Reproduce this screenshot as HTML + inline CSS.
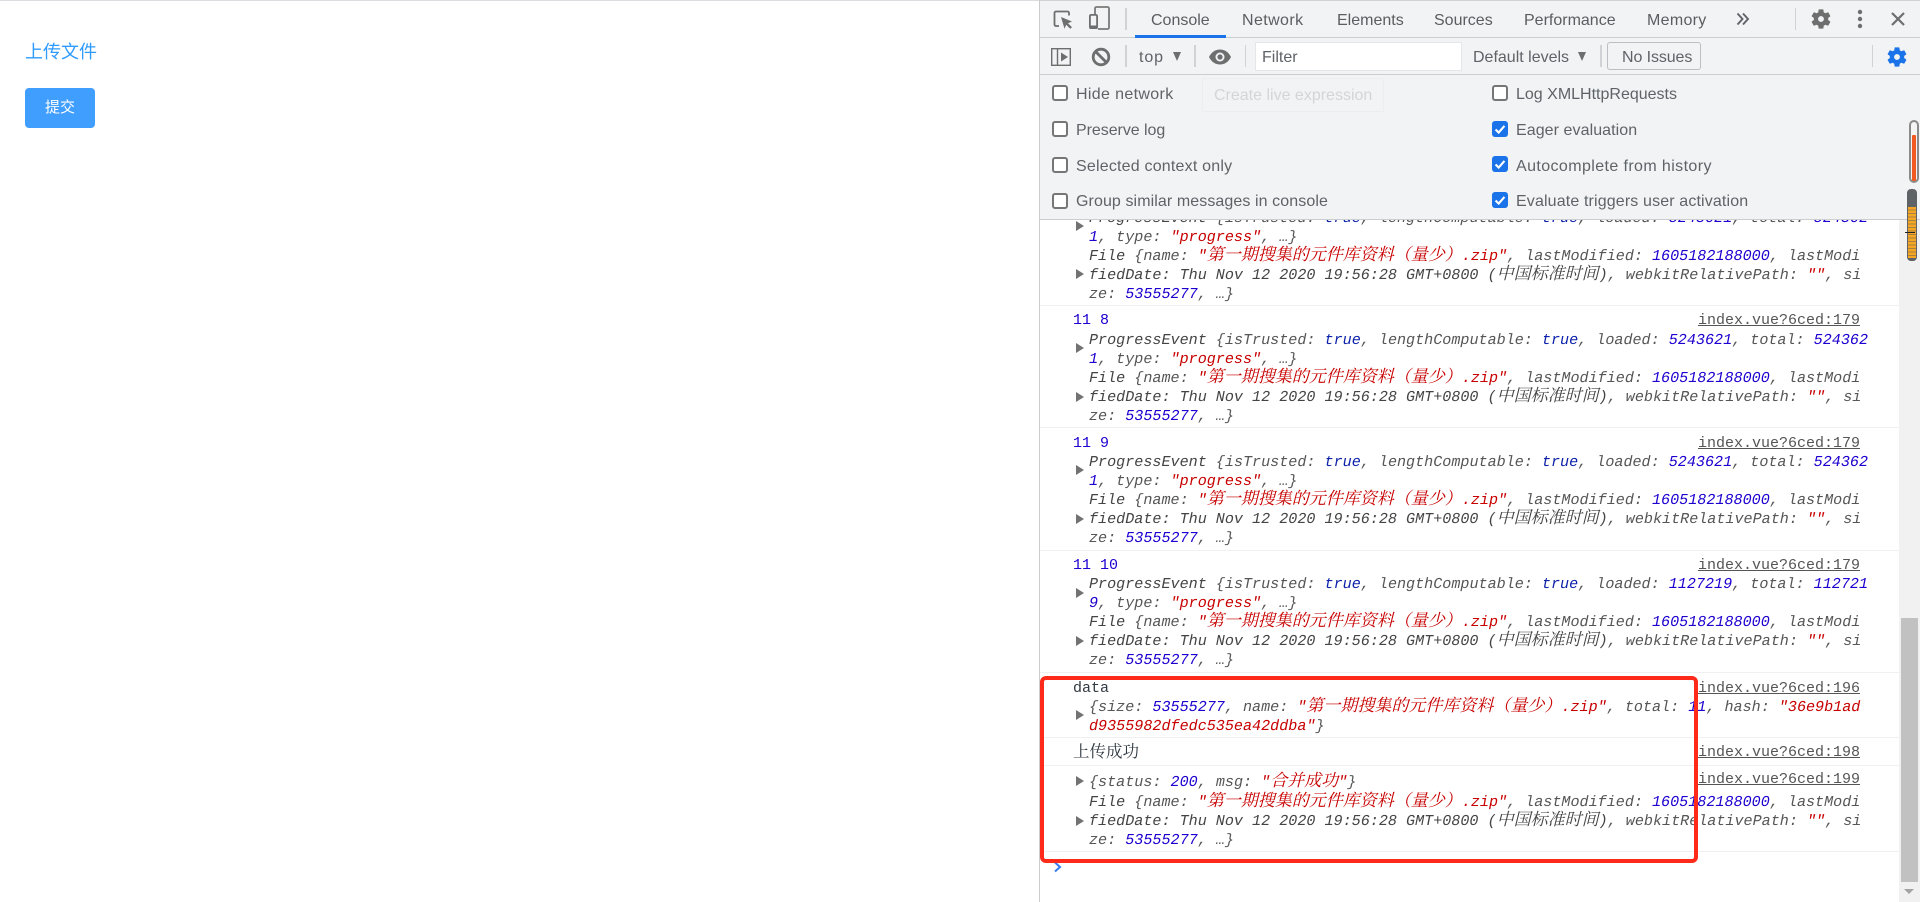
<!DOCTYPE html>
<html><head><meta charset="utf-8"><style>
html,body{margin:0;padding:0;background:#fff;width:1920px;height:902px;overflow:hidden}
body{position:relative;font-family:"Liberation Sans","Noto Sans CJK SC",sans-serif}
div,span.a,svg{position:absolute}
.t{white-space:pre;font-size:16px;color:#5f6368;line-height:20px;height:20px}
.tab{top:11px;color:#5a5d61}
.s{width:2px;background:#d0d2d5}
.cb{width:12px;height:12px;border:2px solid #767676;border-radius:3px;background:#fff}
.ck{width:16px;height:16px;border-radius:3px;background:#1a73e8}
.ck svg{left:0;top:0}
#con{left:1040px;top:220px;width:859px;height:682px;overflow:hidden;background:#fff}
.l{position:absolute;left:49px;margin-top:1px;white-space:pre;font:italic 15.100px/19px "Liberation Mono","Noto Serif CJK SC",monospace;text-rendering:geometricPrecision;height:19px;color:#565656}
.n{position:absolute;left:33px;margin-top:1px;white-space:pre;font:15px/19px "Liberation Mono","Noto Serif CJK SC",monospace;height:19px;color:#303942}
.k{position:absolute;right:39px;margin-top:1px;white-space:pre;font:15px/19px "Liberation Mono",monospace;height:19px;color:#555;text-decoration:underline}
.d{color:#444}.r{color:#c80000}.b{color:#1c00cf}.v{color:#0d22aa}
.c{font-size:17px;line-height:0}
.sep{position:absolute;left:0;width:859px;height:1px;background:#f0f0f0}
.ar{position:absolute;left:36px;width:0;height:0;border-left:8px solid #727272;border-top:5px solid transparent;border-bottom:5px solid transparent}
.row{position:absolute;left:0;width:859px;height:123px}
</style></head><body>

<div style="left:0;top:0;width:1040px;height:1px;background:#dadce0"></div>
<div style="left:25px;top:40px;font-size:18px;line-height:24px;color:#2f9bff;white-space:pre">上传文件</div>
<div style="left:25px;top:88px;width:70px;height:40px;border-radius:4px;background:#409eff;color:#fff;font-size:15px;line-height:40px;text-align:center">提交</div>

<!-- devtools -->
<div style="left:1039px;top:0;width:1px;height:902px;background:#ccc"></div>

<div id="con">
<div class="row" style="top:-37px">
<div class="l" style="top:25px"><span class="d">ProgressEvent</span> {isTrusted: <span class="v">true</span>, lengthComputable: <span class="v">true</span>, loaded: <span class="b">5243621</span>, total: <span class="b">524362</span></div>
<div class="l" style="top:44px"><span class="b">1</span>, type: <span class="r">"progress"</span>, …}</div>
<div class="l" style="top:63px"><span class="d">File</span> {name: <span class="r">"<span class="c">第一期搜集的元件库资料（量少）</span>.zip"</span>, lastModified: <span class="b">1605182188000</span>, lastModi</div>
<div class="l" style="top:82px"><span class="d">fiedDate: Thu Nov 12 2020 19:56:28 GMT+0800 (<span class="c">中国标准时间</span>)</span>, webkitRelativePath: <span class="r">""</span>, si</div>
<div class="l" style="top:101px">ze: <span class="b">53555277</span>, …}</div>
<div class="ar" style="top:38px"></div>
<div class="ar" style="top:86px"></div>
<div class="sep" style="top:122px"></div>
</div>

<div class="row" style="top:85px">
<div class="n" style="top:5px;color:#1c00cf">11 8</div>
<div class="k" style="top:5px">index.vue?6ced:179</div>
<div class="l" style="top:25px"><span class="d">ProgressEvent</span> {isTrusted: <span class="v">true</span>, lengthComputable: <span class="v">true</span>, loaded: <span class="b">5243621</span>, total: <span class="b">524362</span></div>
<div class="l" style="top:44px"><span class="b">1</span>, type: <span class="r">"progress"</span>, …}</div>
<div class="l" style="top:63px"><span class="d">File</span> {name: <span class="r">"<span class="c">第一期搜集的元件库资料（量少）</span>.zip"</span>, lastModified: <span class="b">1605182188000</span>, lastModi</div>
<div class="l" style="top:82px"><span class="d">fiedDate: Thu Nov 12 2020 19:56:28 GMT+0800 (<span class="c">中国标准时间</span>)</span>, webkitRelativePath: <span class="r">""</span>, si</div>
<div class="l" style="top:101px">ze: <span class="b">53555277</span>, …}</div>
<div class="ar" style="top:38px"></div>
<div class="ar" style="top:87px"></div>
<div class="sep" style="top:122px"></div>
</div>

<div class="row" style="top:208px">
<div class="n" style="top:5px;color:#1c00cf">11 9</div>
<div class="k" style="top:5px">index.vue?6ced:179</div>
<div class="l" style="top:24px"><span class="d">ProgressEvent</span> {isTrusted: <span class="v">true</span>, lengthComputable: <span class="v">true</span>, loaded: <span class="b">5243621</span>, total: <span class="b">524362</span></div>
<div class="l" style="top:43px"><span class="b">1</span>, type: <span class="r">"progress"</span>, …}</div>
<div class="l" style="top:62px"><span class="d">File</span> {name: <span class="r">"<span class="c">第一期搜集的元件库资料（量少）</span>.zip"</span>, lastModified: <span class="b">1605182188000</span>, lastModi</div>
<div class="l" style="top:81px"><span class="d">fiedDate: Thu Nov 12 2020 19:56:28 GMT+0800 (<span class="c">中国标准时间</span>)</span>, webkitRelativePath: <span class="r">""</span>, si</div>
<div class="l" style="top:100px">ze: <span class="b">53555277</span>, …}</div>
<div class="ar" style="top:37px"></div>
<div class="ar" style="top:86px"></div>
<div class="sep" style="top:122px"></div>
</div>

<div class="row" style="top:330px">
<div class="n" style="top:5px;color:#1c00cf">11 10</div>
<div class="k" style="top:5px">index.vue?6ced:179</div>
<div class="l" style="top:24px"><span class="d">ProgressEvent</span> {isTrusted: <span class="v">true</span>, lengthComputable: <span class="v">true</span>, loaded: <span class="b">1127219</span>, total: <span class="b">112721</span></div>
<div class="l" style="top:43px"><span class="b">9</span>, type: <span class="r">"progress"</span>, …}</div>
<div class="l" style="top:62px"><span class="d">File</span> {name: <span class="r">"<span class="c">第一期搜集的元件库资料（量少）</span>.zip"</span>, lastModified: <span class="b">1605182188000</span>, lastModi</div>
<div class="l" style="top:81px"><span class="d">fiedDate: Thu Nov 12 2020 19:56:28 GMT+0800 (<span class="c">中国标准时间</span>)</span>, webkitRelativePath: <span class="r">""</span>, si</div>
<div class="l" style="top:100px">ze: <span class="b">53555277</span>, …}</div>
<div class="ar" style="top:38px"></div>
<div class="ar" style="top:86px"></div>
<div class="sep" style="top:122px"></div>
</div>

<!-- data -->
<div class="n" style="top:458px">data</div>
<div class="k" style="top:458px">index.vue?6ced:196</div>
<div class="l" style="top:477px">{size: <span class="b">53555277</span>, name: <span class="r">"<span class="c">第一期搜集的元件库资料（量少）</span>.zip"</span>, total: <span class="b">11</span>, hash: <span class="r">"36e9b1ad</span></div>
<div class="l" style="top:496px"><span class="r">d9355982dfedc535ea42ddba"</span>}</div>
<div class="ar" style="top:490px"></div>
<div class="sep" style="top:517px"></div>
<div class="n" style="top:522px;font-size:16.500px">上传成功</div>
<div class="k" style="top:522px">index.vue?6ced:198</div>
<div class="sep" style="top:545px"></div>
<div class="k" style="top:549px">index.vue?6ced:199</div>
<div class="l" style="top:552px">{status: <span class="b">200</span>, msg: <span class="r">"<span class="c">合并成功</span>"</span>}</div>
<div class="ar" style="top:556px"></div>
<div class="l" style="top:572px"><span class="d">File</span> {name: <span class="r">"<span class="c">第一期搜集的元件库资料（量少）</span>.zip"</span>, lastModified: <span class="b">1605182188000</span>, lastModi</div>
<div class="l" style="top:591px"><span class="d">fiedDate: Thu Nov 12 2020 19:56:28 GMT+0800 (<span class="c">中国标准时间</span>)</span>, webkitRelativePath: <span class="r">""</span>, si</div>
<div class="l" style="top:610px">ze: <span class="b">53555277</span>, …}</div>
<div class="ar" style="top:596px"></div>
<div class="sep" style="top:631px"></div>
<svg style="left:13px;top:641px" width="10" height="12" viewBox="0 0 10 12"><path d="M2 1.500L7 6L2 10.500" fill="none" stroke="#367cf1" stroke-width="2"/></svg>
</div>

<!-- scrollbar -->
<div style="left:1899px;top:219px;width:21px;height:683px;background:#f1f1f1"></div>
<div style="left:1901px;top:618px;width:17px;height:264px;background:#c1c1c1"></div>
<div style="left:1904px;top:889px;width:0;height:0;border-left:5px solid transparent;border-right:5px solid transparent;border-top:5px solid #a3a3a3"></div>

<!-- top bars -->
<div style="left:1040px;top:0;width:880px;height:219px;background:#f1f3f4"></div>
<div style="left:1040px;top:0;width:880px;height:1px;background:#d0d2d5"></div>
<div style="left:1040px;top:37px;width:880px;height:1px;background:#cbcdd1"></div>
<div style="left:1040px;top:74px;width:880px;height:1px;background:#cbcdd1"></div>
<div style="left:1040px;top:219px;width:880px;height:1px;background:#cbcdd1"></div>

<!-- row 1 icons -->
<svg style="left:1052px;top:8px" width="22" height="22" viewBox="0 0 22 22"><path d="M7 18H4a1.500 1.500 0 0 1-1.500-1.500V5A1.500 1.500 0 0 1 4 3.500h11.500A1.500 1.500 0 0 1 17 5v2.500" fill="none" stroke="#6e6e6e" stroke-width="1.800"/><path d="M9 9l11 4.500-4 1.700 4 4-1.800 1.500-4-4-1.700 4z" fill="#6e6e6e"/></svg>
<svg style="left:1088px;top:6px" width="24" height="25" viewBox="0 0 24 25"><path d="M7 9V2.500A1.500 1.500 0 0 1 8.500 1h11A1.500 1.500 0 0 1 21 2.500v19a1.500 1.500 0 0 1-1.500 1.500H10" fill="none" stroke="#7a7a7a" stroke-width="1.800"/><rect x="1.900" y="8.900" width="7.200" height="13.200" rx="1.200" fill="none" stroke="#6e6e6e" stroke-width="1.800"/><rect x="1.500" y="19.500" width="8" height="3.500" fill="#6e6e6e"/></svg>
<div class="s" style="left:1125px;top:8px;height:22px"></div>
<div class="t tab" style="left:1151px">Console</div>
<div style="left:1135px;top:35px;width:91px;height:3px;background:#1a73e8"></div>
<div class="t tab" style="left:1242px;letter-spacing:.4px">Network</div>
<div class="t tab" style="left:1337px">Elements</div>
<div class="t tab" style="left:1434px">Sources</div>
<div class="t tab" style="left:1524px">Performance</div>
<div class="t tab" style="left:1647px;letter-spacing:.3px">Memory</div>
<svg style="left:1736px;top:12px" width="14" height="14" viewBox="0 0 14 14"><path d="M1.500 1.500L6.500 7L1.500 12.500M7 1.500L12 7L7 12.500" fill="none" stroke="#5f6368" stroke-width="1.900"/></svg>
<div class="s" style="left:1795px;top:8px;height:22px;width:1px"></div>
<svg style="left:1809px;top:6.500px" width="24" height="24" viewBox="0 0 24 24"><path fill="#6e6e6e" d="M19.140 12.940c.04-.3.06-.61.06-.94 0-.32-.02-.64-.07-.94l2.030-1.580c.18-.14.23-.41.12-.61l-1.920-3.320c-.12-.22-.37-.29-.59-.22l-2.390.96c-.5-.38-1.030-.7-1.620-.94l-.36-2.540c-.04-.24-.24-.41-.48-.41h-3.840c-.24 0-.43.17-.47.41l-.36 2.540c-.59.24-1.130.57-1.620.94l-2.390-.96c-.22-.08-.47 0-.59.22L2.740 8.870c-.12.21-.08.47.12.61l2.030 1.580c-.05.3-.09.63-.09.94s.02.64.07.94l-2.030 1.580c-.18.14-.23.41-.12.61l1.920 3.320c.12.22.37.29.59.22l2.390-.96c.5.38 1.030.7 1.620.94l.36 2.540c.05.24.24.41.48.41h3.840c.24 0 .44-.17.47-.41l.36-2.540c.59-.24 1.130-.56 1.620-.94l2.390.96c.22.08.47 0 .59-.22l1.920-3.320c.12-.22.07-.47-.12-.61l-2.010-1.580zM12 14.900c-1.600 0-2.900-1.300-2.900-2.900s1.300-2.900 2.900-2.900 2.900 1.300 2.900 2.900-1.300 2.900-2.900 2.900z"/></svg>
<svg style="left:1855px;top:8px" width="10" height="22" viewBox="0 0 10 22"><circle cx="5" cy="4" r="2.200" fill="#6e6e6e"/><circle cx="5" cy="11" r="2.200" fill="#6e6e6e"/><circle cx="5" cy="18" r="2.200" fill="#6e6e6e"/></svg>
<svg style="left:1890px;top:11px" width="16" height="16" viewBox="0 0 16 16"><path d="M2 2L14 14M14 2L2 14" stroke="#6e6e6e" stroke-width="2.200" fill="none"/></svg>

<!-- row 2 -->
<svg style="left:1050px;top:47px" width="22" height="20" viewBox="0 0 22 20"><rect x="1.700" y="1.700" width="18.600" height="16.600" fill="none" stroke="#6e6e6e" stroke-width="1.400"/><path d="M7.500 1v18" stroke="#6e6e6e" stroke-width="1.400"/><path d="M11 5.500l7 4.500-7 4.500z" fill="#6e6e6e"/></svg>
<svg style="left:1091px;top:47px" width="20" height="20" viewBox="0 0 20 20"><circle cx="10" cy="10" r="7.800" fill="none" stroke="#6e6e6e" stroke-width="2.800"/><path d="M4.500 4.500l11 11" stroke="#6e6e6e" stroke-width="2.800"/></svg>
<div class="s" style="left:1125px;top:45px;height:22px"></div>
<div class="t" style="left:1139px;top:48px;letter-spacing:.9px">top</div>
<div style="left:1173px;top:52px;width:0;height:0;border-left:4.500px solid transparent;border-right:4.500px solid transparent;border-top:9px solid #6e6e6e"></div>
<div class="s" style="left:1194px;top:45px;height:22px"></div>
<svg style="left:1208px;top:48px" width="24" height="18" viewBox="0 0 24 18"><path d="M1 9C3.500 4 7.500 1.500 12 1.500S20.500 4 23 9c-2.500 5-6.500 7.500-11 7.500S3.500 14 1 9z" fill="#6e6e6e"/><circle cx="12" cy="9" r="4.500" fill="#f1f3f4"/><circle cx="12" cy="9" r="2.600" fill="#6e6e6e"/></svg>
<div class="s" style="left:1245px;top:45px;height:22px;width:1px"></div>
<div style="left:1255px;top:42px;width:205px;height:27px;background:#fff;border:1px solid #e4e6e8"></div>
<div class="t" style="left:1262px;top:48px">Filter</div>
<div class="t" style="left:1473px;top:48px">Default levels</div>
<div style="left:1578px;top:52px;width:0;height:0;border-left:4.500px solid transparent;border-right:4.500px solid transparent;border-top:9px solid #6e6e6e"></div>
<div class="s" style="left:1600px;top:45px;height:22px"></div>
<div style="left:1607px;top:42px;width:92px;height:26px;border:1px solid #bcbfc3;border-radius:3px"></div>
<div class="t" style="left:1622px;top:48px;letter-spacing:-.1px">No Issues</div>
<div class="s" style="left:1872px;top:45px;height:22px;width:1px"></div>
<svg style="left:1885px;top:45px" width="24" height="24" viewBox="0 0 24 24"><path fill="#1a73e8" d="M19.140 12.940c.04-.3.06-.61.06-.94 0-.32-.02-.64-.07-.94l2.030-1.580c.18-.14.23-.41.12-.61l-1.920-3.320c-.12-.22-.37-.29-.59-.22l-2.390.96c-.5-.38-1.030-.7-1.620-.94l-.36-2.540c-.04-.24-.24-.41-.48-.41h-3.840c-.24 0-.43.17-.47.41l-.36 2.540c-.59.24-1.130.57-1.620.94l-2.390-.96c-.22-.08-.47 0-.59.22L2.740 8.870c-.12.21-.08.47.12.61l2.030 1.580c-.05.3-.09.63-.09.94s.02.64.07.94l-2.030 1.580c-.18.14-.23.41-.12.61l1.920 3.320c.12.22.37.29.59.22l2.390-.96c.5.38 1.030.7 1.620.94l.36 2.540c.05.24.24.41.48.41h3.840c.24 0 .44-.17.47-.41l.36-2.540c.59-.24 1.130-.56 1.620-.94l2.390.96c.22.08.47 0 .59-.22l1.920-3.320c.12-.22.07-.47-.12-.61l-2.010-1.580zM12 14.900c-1.600 0-2.900-1.300-2.900-2.900s1.300-2.900 2.900-2.900 2.900 1.300 2.900 2.900-1.300 2.900-2.900 2.900z"/></svg>

<!-- settings pane -->
<div style="left:1202px;top:78px;width:180px;height:32px;border:1px solid #ebedef;border-radius:2px"></div>
<div class="t" style="left:1214px;top:86px;color:#d3d5d8">Create live expression</div>

<div class="cb" style="left:1052px;top:85px"></div><div class="t" style="left:1076px;top:85px;letter-spacing:.35px">Hide network</div>
<div class="cb" style="left:1052px;top:121px"></div><div class="t" style="left:1076px;top:121px;letter-spacing:-.05px">Preserve log</div>
<div class="cb" style="left:1052px;top:157px"></div><div class="t" style="left:1076px;top:157px;letter-spacing:.2px">Selected context only</div>
<div class="cb" style="left:1052px;top:193px"></div><div class="t" style="left:1076px;top:192px;letter-spacing:.09px">Group similar messages in console</div>

<div class="cb" style="left:1492px;top:85px"></div><div class="t" style="left:1516px;top:85px">Log XMLHttpRequests</div>
<div class="ck" style="left:1492px;top:121px"><svg width="16" height="16" viewBox="0 0 18 18"><path d="M4 9.500L7.500 13L14 5.500" fill="none" stroke="#fff" stroke-width="2.400"/></svg></div><div class="t" style="left:1516px;top:121px;letter-spacing:.07px">Eager evaluation</div>
<div class="ck" style="left:1492px;top:156px"><svg width="16" height="16" viewBox="0 0 18 18"><path d="M4 9.500L7.500 13L14 5.500" fill="none" stroke="#fff" stroke-width="2.400"/></svg></div><div class="t" style="left:1516px;top:157px;letter-spacing:.4px">Autocomplete from history</div>
<div class="ck" style="left:1492px;top:192px"><svg width="16" height="16" viewBox="0 0 18 18"><path d="M4 9.500L7.500 13L14 5.500" fill="none" stroke="#fff" stroke-width="2.400"/></svg></div><div class="t" style="left:1516px;top:192px;letter-spacing:.14px">Evaluate triggers user activation</div>

<!-- overlay widgets -->
<div style="left:1909px;top:120px;width:6px;height:59px;border:2px solid #8a8a8a;border-radius:5px;background:#f4f4f4"></div>
<div style="left:1912px;top:135px;width:4px;height:46px;background:#f05a22;border-radius:1px"></div>
<div style="left:1907px;top:189px;width:10px;height:72px;background:#5f6368;border-radius:4px"></div>
<div style="left:1908px;top:207px;width:8px;height:51px;background:repeating-linear-gradient(180deg,#f5a623 0,#f5a623 2.500px,#a9803f 2.500px,#a9803f 3.500px)"></div>
<div style="left:1905px;top:232px;width:10px;height:1px;background:#222"></div>

<!-- red annotation -->
<div style="left:1040px;top:676px;width:650px;height:179px;border:4px solid #ff2a1a;border-radius:6px"></div>
</body></html>
